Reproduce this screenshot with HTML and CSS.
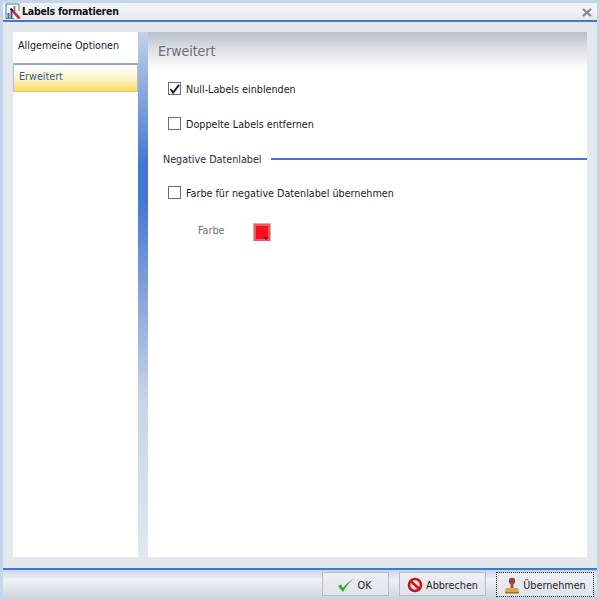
FILE: index.html
```html
<!DOCTYPE html>
<html lang="de">
<head>
<meta charset="utf-8">
<title>Labels formatieren</title>
<link rel="stylesheet" href="styles.css">
</head>
<body>
<div class="dialog">
  <header class="titlebar">
    <svg class="appicon" width="16" height="17" viewBox="0 0 16 17">
      <path d="M14 8 V1 H1 V15.500 H9" fill="#f4f6fa" stroke="#6a7282"/>
      <rect x="2.500" y="10" width="2" height="5" fill="#2f6fc0"/>
      <rect x="5.500" y="6" width="2" height="9" fill="#3f5a90"/>
      <rect x="8.500" y="3" width="2" height="5" fill="#6f8fc0"/>
      <path d="M7 7 L14.500 15.500" stroke="#d81f26" stroke-width="2.600"/>
      <path d="M5.500 5.500 L7.500 7.500" stroke="#222" stroke-width="2"/>
    </svg>
    <span class="title">Labels formatieren</span>
    <svg class="close" width="10" height="9" viewBox="0 0 10 9">
      <path d="M1 1 L9 8 M9 1 L1 8" stroke="#85888c" stroke-width="2.200"/>
    </svg>
  </header>
  <main class="body">
    <nav class="nav">
      <div class="nav-item">Allgemeine Optionen</div>
      <div class="nav-item active">Erweitert</div>
    </nav>
    <div class="strip"></div>
    <section class="panel">
      <h1 class="panel-head">Erweitert</h1>
      <div class="panel-body">
        <label class="check row-null"><span class="box">
          <svg width="12" height="12" viewBox="0 0 12 12"><path d="M1.500 6 L4.500 10 L11 1.500" fill="none" stroke="#1c1c1c" stroke-width="2"/></svg>
        </span><span class="text">Null-Labels einblenden</span></label>
        <label class="check row-dup"><span class="box"></span><span class="text">Doppelte Labels entfernen</span></label>
        <div class="group"><span>Negative Datenlabel</span><i class="rule"></i></div>
        <label class="check row-neg"><span class="box"></span><span class="text">Farbe für negative Datenlabel übernehmen</span></label>
        <div class="color-row">
          <span class="color-label">Farbe</span>
          <span class="swatch"><i class="arrow"></i></span>
        </div>
      </div>
    </section>
  </main>
  <footer class="footer">
    <button class="btn btn-ok" type="button">
      <svg width="19" height="16" viewBox="0 0 19 16"><path d="M1 9 L6 15 C9 9 13 4 18 1 C13 3.500 9 7 6 11 L4 7.500 Z" fill="#2fa82f"/></svg>OK
    </button>
    <button class="btn btn-cancel" type="button">
      <svg width="16" height="16" viewBox="0 0 16 16"><circle cx="8" cy="8" r="6" fill="#f3e6e6" stroke="#c5161d" stroke-width="2.600"/><path d="M3.500 4 L12.500 12" stroke="#c5161d" stroke-width="2.400"/></svg>Abbrechen
    </button>
    <button class="btn btn-apply" type="button">
      <svg width="16" height="17" viewBox="0 0 16 17"><circle cx="8" cy="4" r="3.200" fill="#9c3f3a"/><rect x="6.500" y="6" width="3" height="5" fill="#8a5a48"/><path d="M2 11 H14 L15 15 H1 Z" fill="#e0a050"/><rect x="1" y="15" width="14" height="1.500" fill="#b06a20"/></svg>Übernehmen
    </button>
  </footer>
</div>
</body>
</html>
```

FILE: styles.css
```css
* { box-sizing: border-box; }
html, body { margin: 0; padding: 0; }
body {
  width: 600px;
  height: 600px;
  overflow: hidden;
  font-family: "DejaVu Sans Condensed", "Liberation Sans", Arial, sans-serif;
  font-size: 10.700px;
  color: #1a1a1a;
}
.dialog {
  width: 600px;
  height: 600px;
  display: flex;
  flex-direction: column;
  border: 3px solid #c3d6ec;
  background: #e4e7ec;
}
.titlebar {
  flex: none;
  height: 19px;
  display: flex;
  align-items: center;
  gap: 1px;
  padding: 0 5px 0 2px;
  border-bottom: 2px solid #4677d0;
  background: linear-gradient(#f0f2f6, #f2f4f8 40%, #e4e7ec);
}
.appicon { flex: none; }
.title {
  flex: 1;
  padding-bottom: 2px;
  font-weight: bold;
  font-size: 10.500px;
  letter-spacing: -0.25px;
  color: #111;
}
.close { flex: none; margin-top: 2px; }
.body {
  flex: 1;
  min-height: 0;
  display: flex;
  padding: 10px 10px 11px;
}
.nav {
  flex: none;
  width: 125px;
  background: #fff;
}
.nav-item {
  height: 31px;
  padding: 6px 5px 0;
  line-height: 15px;
  color: #16181c;
}
.nav-item.active {
  height: 29px;
  padding: 4px 5px 0;
  color: #2f5f96;
  border: 1px solid #a9c0da;
  border-top: 2px solid #92a9c4;
  border-bottom-color: #e9c55a;
  background: linear-gradient(#fff 10%, #fdf0b8 60%, #fbd968);
}
.strip {
  flex: none;
  width: 10px;
  background: linear-gradient(#c3d1e9 0, #4677d0 25%, #4677d0 32%, #8aa6da 51%, #c8d4e9 70%, #e4e7ec 100%);
}
.panel {
  flex: 1;
  min-width: 0;
  display: flex;
  flex-direction: column;
  background: #fff;
}
.panel-head {
  flex: none;
  height: 38px;
  margin: 0;
  padding: 11px 10px 0;
  font-weight: normal;
  font-size: 14px;
  line-height: 17px;
  color: #6d7078;
  background: linear-gradient(#b8bfc9, #dde0e5 45%, #fff);
}
.panel-body {
  flex: 1;
  display: flex;
  flex-direction: column;
  padding-left: 15px;
}
.check {
  display: flex;
  align-items: flex-start;
  gap: 5px;
  height: 14px;
  margin-left: 5px;
}
.text { padding-top: 1px; line-height: 14px; }
.box {
  flex: none;
  width: 13px;
  height: 13px;
  border: 1px solid #6d6d6d;
  background: #fff;
  display: flex;
  align-items: center;
  justify-content: center;
}
.row-null { margin-top: 12px; }
.row-dup { margin-top: 21px; }
.group {
  display: flex;
  align-items: center;
  gap: 9px;
  margin-top: 21px;
  height: 14px;
  color: #1f2a3a;
}
.rule { flex: 1; height: 2px; background: #4677d0; }
.row-neg { margin-top: 20px; }
.color-row {
  display: flex;
  align-items: flex-start;
  gap: 28px;
  margin-top: 23px;
  padding-left: 35px;
  color: #6f6f6f;
}
.color-label { width: 27px; padding-top: 1px; line-height: 14px; }
.swatch {
  position: relative;
  width: 18px;
  height: 18px;
  background: #f7101a;
  border: 1px solid #b8b8b8;
  border-bottom: 0;
  box-shadow: inset 0 0 0 2px #f9555b;
}
.swatch .arrow {
  position: absolute;
  right: 1px;
  bottom: 1px;
  border: 3px solid transparent;
  border-top: 3px solid #8a0a10;
  border-bottom: 0;
}
.footer {
  flex: none;
  height: 29px;
  display: flex;
  justify-content: flex-end;
  align-items: flex-start;
  gap: 10px;
  padding: 2px 3px 0 0;
  border-top: 2px solid #4677d0;
  background: linear-gradient(#c8d5ea, #eef1f6 35%, #e6e9ee 55%, #d3d6da);
}
.btn {
  height: 24px;
  display: flex;
  align-items: center;
  justify-content: center;
  font: 10.700px "DejaVu Sans Condensed", "Liberation Sans", Arial, sans-serif;
  color: #1a2230;
  background: linear-gradient(#eef0f4, #e0e3e8);
  border: 1px solid #b9bcc0;
  padding: 2px 0 0;
}
.btn-ok { width: 67px; gap: 2px; padding-right: 3px; }
.btn-cancel { width: 87px; gap: 3px; }
.btn-apply { width: 98px; height: 25px; gap: 3px; border: 1px dotted #222; }
```
